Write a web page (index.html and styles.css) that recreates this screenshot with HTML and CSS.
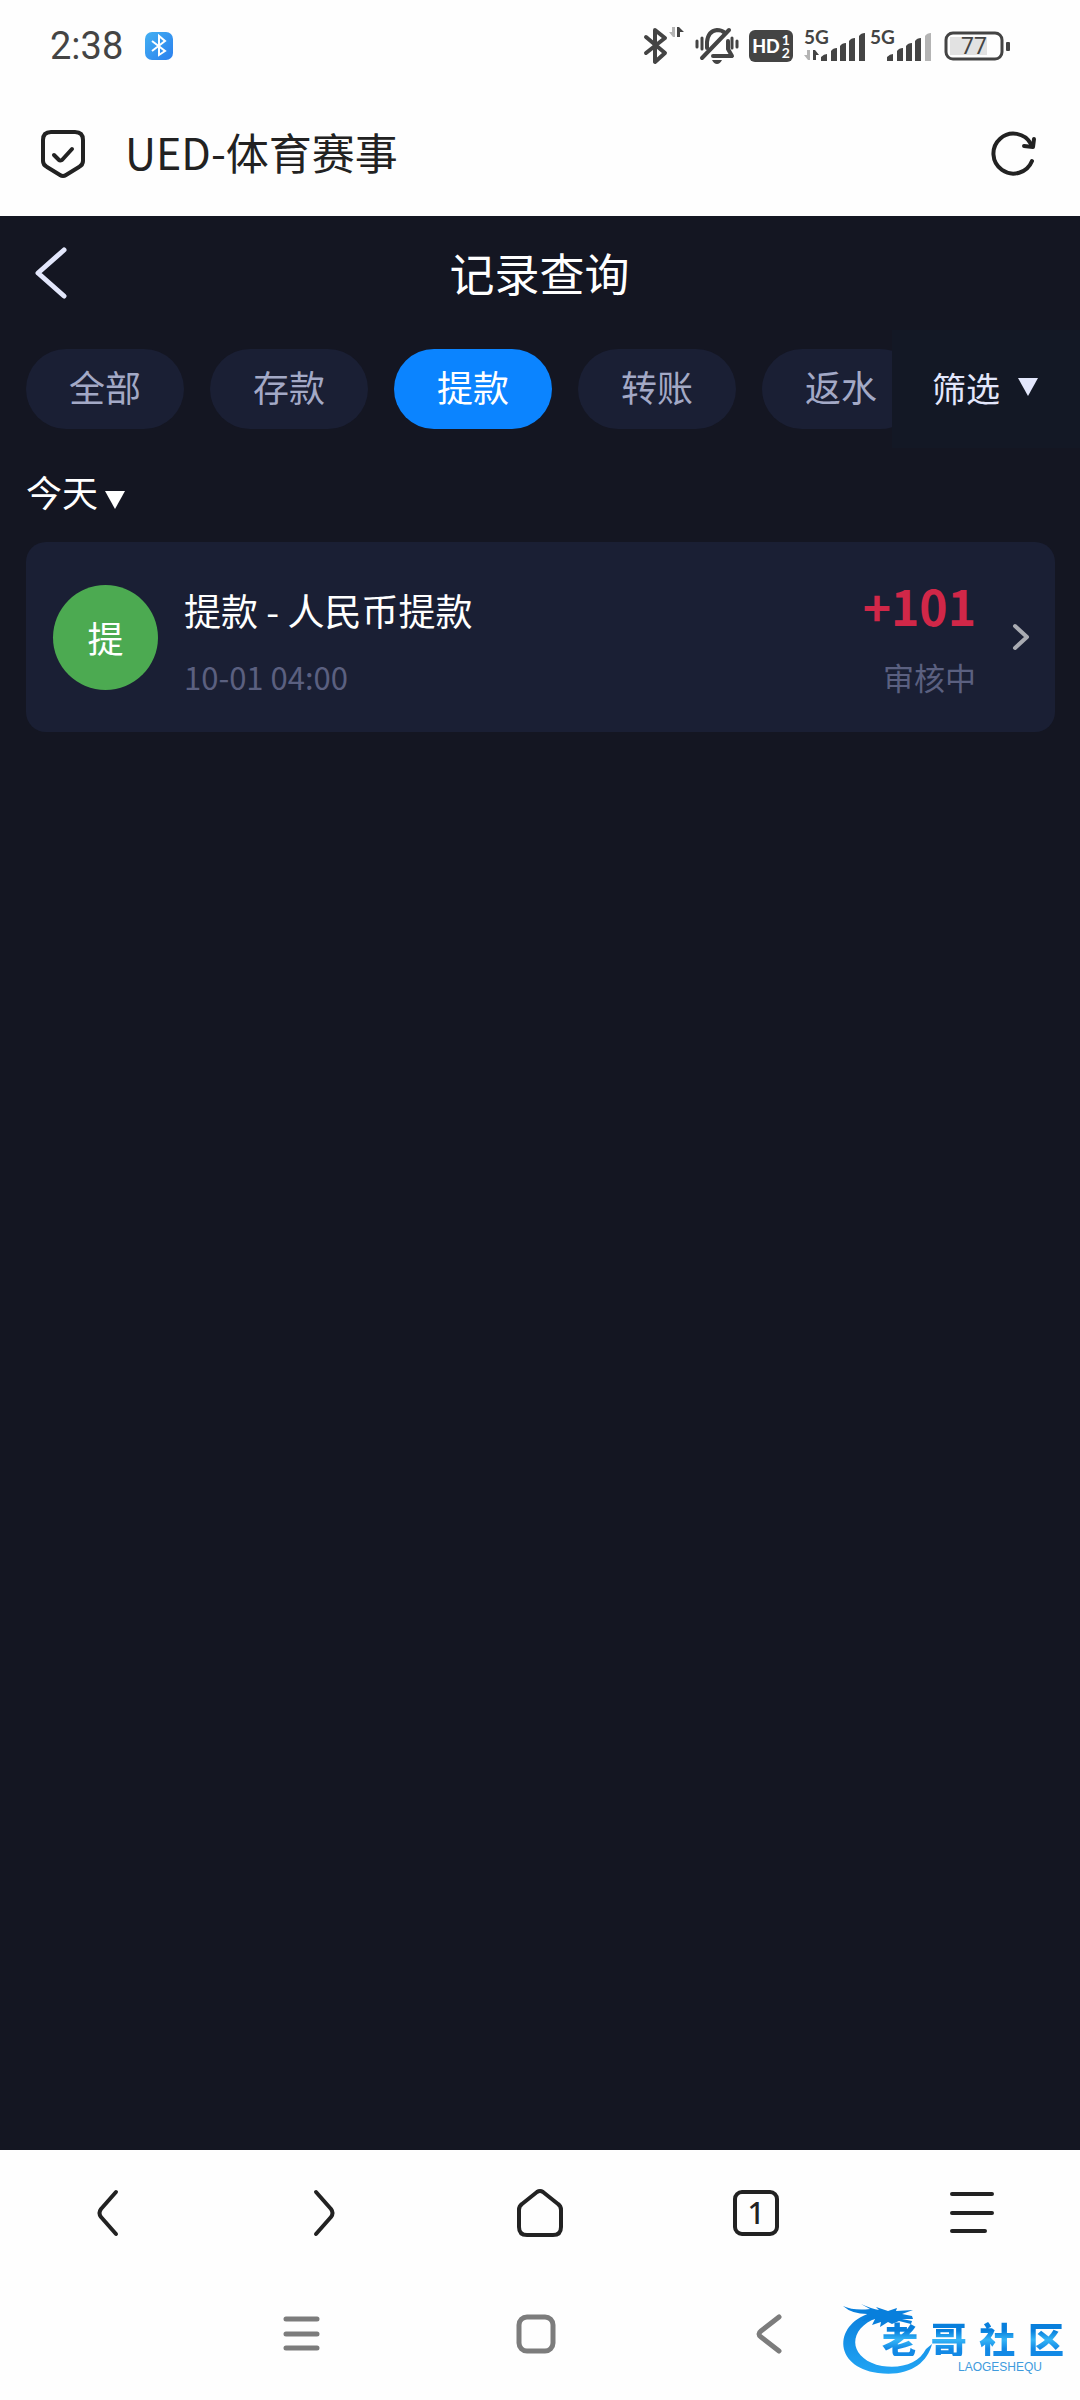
FILE: index.html
```html
<!DOCTYPE html>
<html lang="zh-CN">
<head>
<meta charset="utf-8">
<meta name="viewport" content="width=device-width, initial-scale=1">
<title>UED-体育赛事</title>
<link rel="stylesheet" href="styles.css">
</head>
<body>
<div class="screen">
  <div class="status">
    <div class="status-left">
      <span class="clock">2:38</span>
      <svg width="28" height="28" viewBox="0 0 28 28" aria-hidden="true">
        <defs><linearGradient id="bt" x1="0" y1="0" x2="1" y2="1"><stop offset="0" stop-color="#43b0f2"/><stop offset="1" stop-color="#2b7fee"/></linearGradient></defs>
        <rect width="28" height="28" rx="7" fill="url(#bt)"/>
        <path d="M7 9l13 10-6 4V4l6 5L7 19" fill="none" stroke="#fff" stroke-width="2"/>
      </svg>
    </div>
    <div class="status-right">
      <svg width="42" height="38" viewBox="0 0 42 38" aria-hidden="true">
        <path d="M2 10l19 16-10 9V3l10 8L2 26" fill="none" stroke="#444" stroke-width="4" stroke-linejoin="round" stroke-linecap="round"/>
        <path d="M31 0v10h-2l-4-5h3V0z" fill="#b4b4b4"/><path d="M33 10V0h2l5 5h-4v5z" fill="#444"/>
      </svg>
      <svg class="bell" width="42" height="38" viewBox="0 0 42 38" aria-hidden="true">
        <g fill="none" stroke="#444" stroke-width="3" stroke-linecap="round">
          <path d="M11 21V15Q12 4 21 3Q26 3 29 6M32 14V22L36 29H17" stroke-width="4" stroke-linejoin="round"/>
          <path d="M6 31L33 3" stroke-width="4"/>
          <path d="M1 14v6M6 11v11M41 14v6M36 11v10"/>
        </g>
        <path d="M16 33h10q-2 4-5 4t-5-4z" fill="#444"/>
      </svg>
      <span class="hd"><b>HD</b><span class="sim"><i>1</i><i>2</i></span></span>
      <svg width="60" height="34" viewBox="0 0 60 34" aria-hidden="true">
        <text x="-1" y="15" class="net">5G</text>
        <path d="M5 21v10H3l-4-5h3v-5z" fill="#b4b4b4"/><path d="M8 31V21h2l4 5h-3v5z" fill="#444"/>
        <path d="M16 28q3-3 6-3v7h-6zM26 22q2-3 6-3v13h-6zM35 17q2-3 6-3v18h-6zM44 12q2-3 6-3v23h-6zM54 7q2-3 6-3v28h-6z" fill="#444"/>
      </svg>
      <svg class="sig-b" width="60" height="34" viewBox="0 0 60 34" aria-hidden="true">
        <text x="-1" y="15" class="net">5G</text>
        <path d="M16 28q3-3 6-3v7h-6zM26 22q2-3 6-3v13h-6zM35 17q2-3 6-3v18h-6zM44 12q2-3 6-3v23h-6z" fill="#444"/>
        <path d="M54 7q2-3 6-3v28h-6z" fill="#b4b4b4"/>
      </svg>
      <svg width="66" height="30" viewBox="0 0 66 30" aria-hidden="true">
        <rect x="6" y="6" width="37" height="18" fill="#e2e2e2"/>
        <rect x="2" y="2" width="56" height="26" rx="7" fill="none" stroke="#444" stroke-width="3"/>
        <rect x="62" y="11" width="4" height="9" rx="1" fill="#444"/>
        <text x="30" y="23" class="level">77</text>
      </svg>
    </div>
  </div>

  <header class="address">
    <svg width="44" height="48" viewBox="0 0 44 48" aria-hidden="true" fill="none" stroke="#222" stroke-width="4" stroke-linecap="round" stroke-linejoin="round">
      <path d="M10 2H34Q42 2 42 10V31Q42 35 38 37L25 45Q22 47 19 45L6 37Q2 35 2 31V10Q2 2 10 2Z"/>
      <path d="M13 25l5 5q1 1 3 0L31 19"/>
    </svg>
    <span class="site">UED-体育赛事</span>
    <button class="icon-btn" aria-label="刷新">
      <svg width="48" height="48" viewBox="0 0 48 48" fill="none" stroke="#222" stroke-width="4" stroke-linecap="round" stroke-linejoin="round">
        <path d="M42 31A20 20 0 1 1 41 14"/><path d="M44 9L43 17L34 16"/>
      </svg>
    </button>
  </header>

  <main class="app">
    <div class="topbar">
      <button class="icon-btn" aria-label="返回">
        <svg width="32" height="52" viewBox="0 0 32 52" fill="none" stroke="#e3e7fc" stroke-width="5" stroke-linecap="round" stroke-linejoin="round"><path d="M29 3L3 26L29 49"/></svg>
      </button>
      <h1>记录查询</h1>
    </div>

    <div class="filters">
      <nav class="tabs">
        <button class="tab">全部</button>
        <button class="tab">存款</button>
        <button class="tab active">提款</button>
        <button class="tab">转账</button>
        <button class="tab">返水</button>
      </nav>
      <button class="filter">筛选<svg width="20" height="18" viewBox="0 0 20 18" aria-hidden="true"><path d="M0 0h20L10 18z" fill="currentColor"/></svg></button>
    </div>

    <button class="day">今天<svg width="20" height="18" viewBox="0 0 20 18" aria-hidden="true"><path d="M0 0h20L10 18z" fill="currentColor"/></svg></button>

    <a class="record" href="#">
      <span class="badge">提</span>
      <span class="info"><span class="name">提款 - 人民币提款</span><span class="sub">10-01 04:00</span></span>
      <span class="result"><span class="amount">+101</span><span class="sub">审核中</span></span>
      <svg width="16" height="28" viewBox="0 0 16 28" fill="none" stroke="#a9abb2" stroke-width="4" stroke-linecap="round" stroke-linejoin="round" aria-hidden="true"><path d="M2 3L14 14L2 25"/></svg>
    </a>
  </main>

  <nav class="browser-nav">
    <button class="icon-btn" aria-label="后退"><svg width="48" height="48" viewBox="0 0 48 48"><path d="M32 3L17 20Q14 24 17 28L32 45"/></svg></button>
    <button class="icon-btn" aria-label="前进"><svg width="48" height="48" viewBox="0 0 48 48"><path d="M16 3L31 20Q34 24 31 28L16 45"/></svg></button>
    <button class="icon-btn" aria-label="主页"><svg width="48" height="48" viewBox="0 0 48 48"><path d="M21 3Q24 1 27 3L42 15Q45 17 45 21V38Q45 46 37 46H11Q3 46 3 38V21Q3 17 6 15Z"/></svg></button>
    <button class="icon-btn" aria-label="标签页"><span class="count">1</span></button>
    <button class="icon-btn" aria-label="菜单"><svg width="48" height="48" viewBox="0 0 48 48"><path d="M4 5H44M4 24H44M4 42H37"/></svg></button>
  </nav>

  <nav class="system-nav">
    <button class="icon-btn" aria-label="最近任务"><svg width="40" height="40" viewBox="0 0 40 40"><path d="M4 5H35M4 20H35M4 34H35"/></svg></button>
    <button class="icon-btn" aria-label="桌面"><svg width="40" height="40" viewBox="0 0 40 40"><rect x="3" y="3" width="34" height="34" rx="8"/></svg></button>
    <button class="icon-btn" aria-label="返回上级"><svg width="40" height="40" viewBox="0 0 40 40"><path d="M29 3L11 17Q7 20 11 23L29 37"/></svg></button>
  </nav>

  <div class="brand">
    <svg width="96" height="80" viewBox="0 0 96 80" aria-hidden="true">
      <defs><linearGradient id="ring" x1="0" y1="0" x2="0" y2="1"><stop offset="0" stop-color="#0a7fdc"/><stop offset="1" stop-color="#22a5f4"/></linearGradient></defs>
      <path d="M32 14C-9 24-10 69 36 75C66 79 85 66 90 46L84 51C77 65 60 71 40 68C9 62 4 35 30 22L38 19Z" fill="url(#ring)"/>
      <path d="M1 8Q12 13 28 11L19 6Q30 11 37 12L34 9L46 13L55 10L54 13L71 12L60 16L70 18L71 21L60 21L70 23L69 26L57 23L50 26L46 24L38 29L39 24L30 27L33 21L20 23L29 16Q11 17 1 8Z" fill="#087fdc"/>
    </svg>
    <div class="brand-name"><span>老</span><span>哥</span><span>社</span><span>区</span></div>
    <div class="brand-latin">LAOGESHEQU</div>
  </div>
</div>
</body>
</html>
```
FILE: styles.css
```css
* { box-sizing: border-box; }

body {
  margin: 0;
  background: #fefefe;
  font-family: "Noto Sans CJK SC", "Noto Sans", sans-serif;
}

button {
  margin: 0;
  padding: 0;
  border: 0;
  background: none;
  color: inherit;
  font: inherit;
}

svg { display: block; flex: none; overflow: visible; }

.icon-btn { display: flex; align-items: center; justify-content: center; }

.screen {
  position: relative;
  display: flex;
  flex-direction: column;
  min-height: 100vh;
}

/* Phone status bar */
.status {
  display: flex;
  justify-content: space-between;
  align-items: center;
  height: 92px;
  padding: 0 70px 0 50px;
  color: #444;
}

.status-left, .status-right { display: flex; align-items: center; }
.status-left { gap: 22px; }
.clock { font: 400 38px/40px Roboto, sans-serif; }
.bell { margin-left: 10px; }

.hd {
  display: flex;
  align-items: center;
  justify-content: center;
  gap: 2px;
  width: 44px;
  height: 32px;
  margin: 0 12px 0 11px;
  border-radius: 6px;
  background: #444;
  color: #fff;
  font: 700 18px/20px Lato, sans-serif;
}

.sim { display: grid; font-size: 14px; line-height: 13px; }
.sim i { font-style: normal; }
.sig-b { margin: 0 13px 0 6px; }
.net { font: 700 19px Lato, sans-serif; fill: #444; }
.level { font: 400 23px Roboto, sans-serif; fill: #444; text-anchor: middle; }

/* Browser address bar */
.address {
  display: flex;
  align-items: center;
  height: 124px;
  padding: 0 42px 0 41px;
  color: #222;
}

.site { flex: 1; margin-left: 40px; padding-bottom: 6px; font-size: 43px; line-height: 60px; }

/* Records page */
.app {
  display: flex;
  flex: 1;
  flex-direction: column;
  background: #141622;
  color: #fff;
}

.topbar {
  display: grid;
  grid-template-columns: 64px 1fr 64px;
  align-items: center;
  height: 114px;
  padding: 0 20px 0 19px;
}

.topbar h1 {
  margin: 0;
  font-size: 45px;
  font-weight: 400;
  line-height: 64px;
  text-align: center;
}

.filters { display: flex; height: 118px; }

.tabs {
  display: flex;
  flex: 1;
  align-items: center;
  gap: 26px;
  min-width: 0;
  padding-left: 26px;
  overflow: hidden;
}

.tab {
  flex: none;
  width: 158px;
  height: 80px;
  padding-bottom: 6px;
  border-radius: 40px;
  background: #1a1f34;
  color: #a3a9c6;
  font-size: 36px;
  line-height: 52px;
}

.tab.active { background: #0b84ff; color: #fff; }

.filter {
  display: flex;
  align-items: center;
  justify-content: center;
  gap: 18px;
  width: 188px;
  padding: 0 2px 4px 0;
  background: #131825;
  color: #e3e7fc;
  font-size: 34px;
}

.day {
  display: flex;
  align-items: center;
  align-self: flex-start;
  gap: 7px;
  height: 94px;
  padding: 0 0 8px 26px;
  font-size: 36px;
}

.day svg { margin-top: 18px; }

.record {
  display: flex;
  align-items: center;
  height: 190px;
  margin: 0 25px 0 26px;
  padding: 0 26px 0 27px;
  border-radius: 20px;
  background: #1a1f34;
  color: #fff;
  text-decoration: none;
}

.badge {
  display: grid;
  place-items: center;
  width: 105px;
  height: 105px;
  border-radius: 50%;
  background: #4caa51;
  font-size: 36px;
}

.info, .result { display: flex; flex-direction: column; gap: 18px; padding-top: 11px; }
.info { flex: 1; margin-left: 26px; }
.result { align-items: flex-end; margin-right: 37px; }
.name { font-size: 37px; line-height: 50px; }
.amount { color: #d12748; font-size: 48px; font-weight: 700; line-height: 40px; padding-bottom: 10px; }
.sub { color: #5b6080; font-size: 31px; line-height: 48px; }

/* Browser toolbar */
.browser-nav {
  display: grid;
  grid-template-columns: repeat(5, 1fr);
  height: 126px;
  fill: none;
  stroke: #222;
  stroke-width: 4;
  stroke-linecap: round;
  stroke-linejoin: round;
}

.count {
  display: grid;
  place-items: center;
  width: 46px;
  height: 46px;
  border: 4px solid #222;
  border-radius: 9px;
  color: #222;
  font: 500 30px/32px "Noto Sans", sans-serif;
}

/* System navigation */
.system-nav {
  display: flex;
  justify-content: center;
  gap: 194px;
  height: 124px;
  padding: 0 8px 8px 0;
  fill: none;
  stroke: #7c7c7c;
  stroke-width: 5;
  stroke-linecap: round;
}

.brand { position: absolute; right: 16px; bottom: 22px; width: 222px; height: 80px; }

.brand-name {
  position: absolute;
  right: 0;
  top: 22px;
  display: flex;
  justify-content: space-between;
  width: 182px;
  background: linear-gradient(#087fdc 30%, #35b5f7 55%, #1289e5 80%);
  background-clip: text;
  color: transparent;
  font-size: 36px;
  font-weight: 900;
  line-height: 36px;
}

.brand-latin {
  position: absolute;
  right: 22px;
  bottom: 5px;
  color: #3f9bdd;
  font: 12px/12px "Liberation Sans", sans-serif;
}
```
